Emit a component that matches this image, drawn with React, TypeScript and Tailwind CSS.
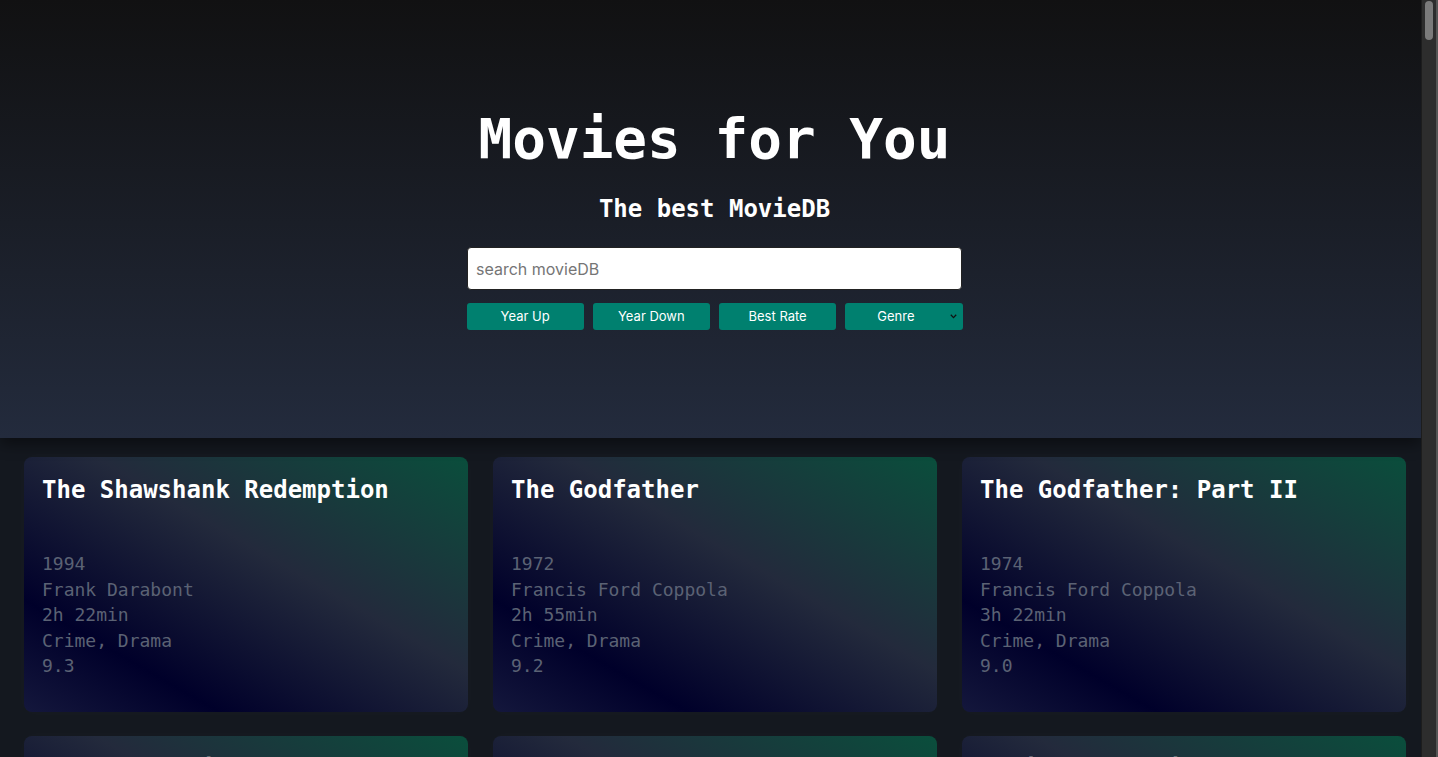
import React, { useState } from 'react';

type Movie = {
  title: string;
  year: number;
  director: string;
  duration: string;
  genre: string;
  rate: string;
};

const movies: Movie[] = [
  { title: 'The Shawshank Redemption', year: 1994, director: 'Frank Darabont', duration: '2h 22min', genre: 'Crime, Drama', rate: '9.3' },
  { title: 'The Godfather', year: 1972, director: 'Francis Ford Coppola', duration: '2h 55min', genre: 'Crime, Drama', rate: '9.2' },
  { title: 'The Godfather: Part II', year: 1974, director: 'Francis Ford Coppola', duration: '3h 22min', genre: 'Crime, Drama', rate: '9.0' },
  { title: 'The Dark Knight', year: 2008, director: 'Christopher Nolan', duration: '2h 32min', genre: 'Action, Crime, Drama', rate: '9.0' },
  { title: '12 Angry Men', year: 1957, director: 'Sidney Lumet', duration: '1h 36min', genre: 'Crime, Drama', rate: '8.9' },
  { title: "Schindler's List", year: 1993, director: 'Steven Spielberg', duration: '3h 15min', genre: 'Biography, Drama, History', rate: '8.9' },
];

const mono = "font-['DejaVu_Sans_Mono',monospace]";
const sans = "font-['Inter','Liberation_Sans',sans-serif]";

const MovieCard = ({ movie }: { movie: Movie }) => (
  <div className="h-[255px] rounded-lg bg-[linear-gradient(to_top_right,#14173c_0%,#00002a_22%,#232a3c_58%,#0a4e3c_100%)] px-[18px] pt-[17px] shadow-[0_0_14px_rgba(255,255,255,0.025)]">
    <h2 className={`${mono} text-[24px] font-bold leading-[32px] text-white whitespace-nowrap`}>{movie.title}</h2>
    <div className={`${mono} mt-[45px] text-[18px] leading-[25.5px] text-[#5b6274]`}>
      <p>{movie.year}</p>
      <p>{movie.director}</p>
      <p>{movie.duration}</p>
      <p>{movie.genre}</p>
      <p>{movie.rate}</p>
    </div>
  </div>
);

export default function App() {
  const [query, setQuery] = useState('');
  const shown = movies.filter(m => m.title.toLowerCase().includes(query.toLowerCase()));

  return (
    <div className="flex h-[757px] w-full overflow-hidden bg-[#14181f]">
      <div className="flex-1 overflow-hidden">
        <header className="relative z-10 flex h-[438px] flex-col items-center bg-linear-to-b from-[#111112] to-[#232b3d] pl-[8px] pt-[107px] shadow-[0_6px_14px_rgba(0,0,0,0.45)]">
          <h1 className={`${mono} text-[56px] font-bold leading-[64px] text-white`}>Movies for You</h1>
          <h3 className={`${mono} mt-[22px] text-[24px] font-bold leading-[32px] text-white`}>The best MovieDB</h3>
          <input
            value={query}
            onChange={e => setQuery(e.target.value)}
            placeholder="search movieDB"
            className={`${sans} mt-[22px] h-[43px] w-[495px] rounded-[4px] border border-[#222] bg-white px-[8px] text-[16px] text-black placeholder:text-[#757575] outline-none`}
          />
          <div className="mt-[13px] grid w-[496px] grid-cols-4 gap-[9px]">
            {['Year Up', 'Year Down', 'Best Rate'].map(label => (
              <button key={label} className={`${sans} h-[27px] rounded-[3px] bg-[#00806f] text-[13px] text-white`}>
                {label}
              </button>
            ))}
            <div className={`${sans} relative flex h-[27px] items-center justify-center rounded-[3px] bg-[#00806f] pr-[16px] text-[13px] text-white`}>
              Genre
              <svg className="absolute right-[6px] top-[11px]" width="7" height="5" viewBox="0 0 7 5">
                <path d="M0.8 0.8 L3.5 3.6 L6.2 0.8" fill="none" stroke="#111" strokeWidth="1.3" />
              </svg>
            </div>
          </div>
        </header>
        <main className="grid grid-cols-[repeat(3,444px)] gap-x-[25px] gap-y-[24px] pl-[24px] pt-[19px] pb-[24px]">
          {shown.map(m => (
            <MovieCard key={m.title} movie={m} />
          ))}
        </main>
      </div>
      <div className="flex h-full w-[17px] border-l border-[#1d1d1d] bg-[#2d2d2d]">
        <div className="flex-1 px-[3px] pt-[1px]">
          <div className="h-[39px] w-[8px] rounded-full bg-[#7b7b7b]" />
        </div>
        <div className="w-[2px] bg-[#555]" />
      </div>
    </div>
  );
}
